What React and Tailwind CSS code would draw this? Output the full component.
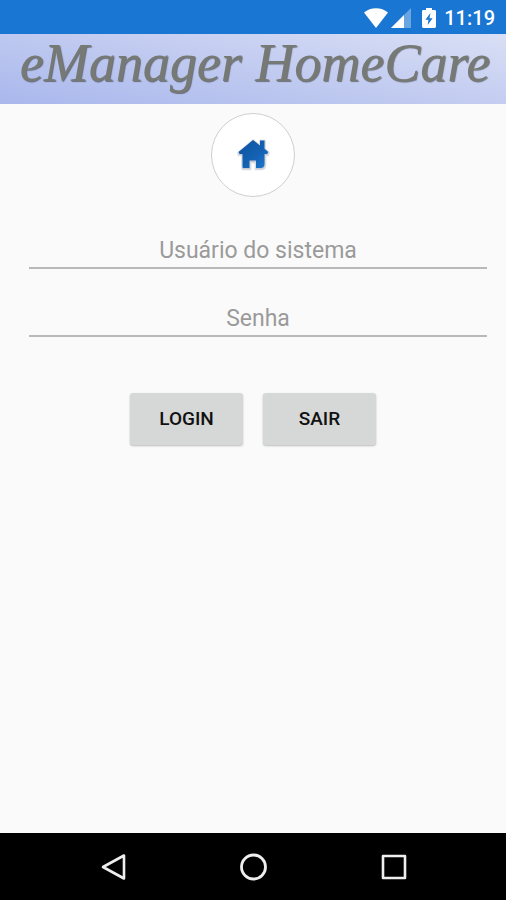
import React, { useState } from "react";

function WifiIcon() {
    return (
        <svg width="26" height="20" viewBox="0 0 26 20" fill="#fff" aria-hidden="true">
            <path d="M13 20 L1 4.6 C4.4 1.7 8.5 0.3 13 0.3 C17.5 0.3 21.6 1.7 25 4.6 Z" />
        </svg>
    );
}

function SignalIcon() {
    return (
        <svg width="20" height="20" viewBox="0 0 20 20" fill="#fff" aria-hidden="true">
            <path d="M20 0 V20 H0 Z" opacity="0.35" />
            <path d="M13 7 V20 H0 Z" />
        </svg>
    );
}

function BatteryIcon() {
    return (
        <svg width="14" height="20" viewBox="0 0 14 20" aria-hidden="true">
            <path
                d="M4 0 H10 V2 H12.6 Q14 2 14 3.4 V18.6 Q14 20 12.6 20 H1.4 Q0 20 0 18.6 V3.4 Q0 2 1.4 2 H4 Z"
                fill="#fff"
            />
            <path d="M8.4 5 L3.4 11.8 H6.5 L5.6 17 L10.6 10.2 H7.5 Z" fill="#1976d2" />
        </svg>
    );
}

function HouseIcon() {
    return (
        <svg width="36" height="36" viewBox="0 0 36 36" aria-hidden="true">
            <defs>
                <linearGradient id="house" x1="0" y1="0" x2="1" y2="1">
                    <stop offset="0" stopColor="#0d529f" />
                    <stop offset="0.6" stopColor="#1462b4" />
                    <stop offset="1" stopColor="#1f7cd0" />
                </linearGradient>
            </defs>
            <path
                d="M18 3 L3 15.5 L3.5 18.5 H7 V31 Q7 32.5 9 32.5 H15.5 V25.5 H20.5 V32.5 H26 Q30.5 32.5 30.5 28 V18.5 H33 L34 15.5 L30 12 V3.5 H25 V8.5 Z"
                fill="#8b95a5"
                stroke="#b9bfc9"
                strokeWidth="1.6"
                strokeLinejoin="round"
                opacity="0.55"
            />
            <path
                d="M18 3 L3.5 15 L4.5 17 H7.5 V30 Q7.5 31 8.5 31 H14.5 V23.5 H21 V31 H25.5 Q29.5 31 29.5 27 V17 H32 L33.3 15 L29.5 11.8 V3.5 H25 V8.5 Z"
                fill="url(#house)"
            />
        </svg>
    );
}

function StatusBar() {
    return (
        <div className="flex h-[34px] items-center justify-end bg-[#1976d2] pt-0.5 pr-[11px] text-white">
            <WifiIcon />
            <span className="ml-0.5 flex">
                <SignalIcon />
            </span>
            <span className="ml-[11px] flex">
                <BatteryIcon />
            </span>
            <span className="ml-2 text-xl leading-none font-medium">11:19</span>
        </div>
    );
}

function Field({ label, type, value, onChange }) {
    return (
        <input
            type={type}
            aria-label={label}
            placeholder={label}
            value={value}
            onChange={(e) => onChange(e.target.value)}
            className="block h-10 w-full border-b-2 border-[#b9b9b9] bg-transparent pt-1 text-center text-[23px] text-gray-900 outline-none placeholder:text-[#9a9a9a]"
        />
    );
}

function ActionButton({ children, type = "button", onClick }) {
    return (
        <button
            type={type}
            onClick={onClick}
            className="h-[52px] w-[113px] rounded-[3px] bg-[#d6d7d7] text-[19px] font-medium text-[#111] shadow-[0_1px_2px_rgba(0,0,0,0.25)]"
        >
            {children}
        </button>
    );
}

function NavBar() {
    return (
        <nav className="flex h-[67px] items-center justify-center gap-[100px] bg-black">
            <button type="button" aria-label="Voltar" className="flex w-10 justify-center">
                <svg width="28" height="28" viewBox="0 0 28 28" fill="none" stroke="#eee" strokeWidth="2.6" strokeLinejoin="round">
                    <path d="M25 2.5 V25.5 L4 14 Z" />
                </svg>
            </button>
            <button type="button" aria-label="Início" className="flex w-10 justify-center">
                <svg width="28" height="28" viewBox="0 0 28 28" fill="none" stroke="#eee" strokeWidth="2.8">
                    <circle cx="14.5" cy="14" r="12" />
                </svg>
            </button>
            <button type="button" aria-label="Recentes" className="flex w-10 justify-center">
                <svg width="28" height="28" viewBox="0 0 28 28" fill="none" stroke="#eee" strokeWidth="2.6" strokeLinejoin="round">
                    <rect x="4" y="3" width="22" height="22" />
                </svg>
            </button>
        </nav>
    );
}

export default function App() {
    const [user, setUser] = useState("");
    const [password, setPassword] = useState("");

    const handleExit = () => {
        setUser("");
        setPassword("");
    };

    return (
        <div className="flex min-h-screen flex-col bg-[#fafafa] font-[Roboto,sans-serif]">
            <StatusBar />

            {/* Brand banner */}
            <header className="flex h-[70px] items-center justify-center bg-linear-[10deg] from-[#a9b7ec] to-[#d9dff5] pb-3 pl-1">
                <h1 className="font-['Liberation_Serif',serif] text-[54px] leading-none whitespace-nowrap text-[#777974] italic [text-shadow:1px_1px_1px_rgba(50,55,50,0.6)]">
                    eManager HomeCare
                </h1>
            </header>

            <main className="flex flex-1 flex-col items-center pt-[9px]">
                <div className="flex size-[84px] items-center justify-center rounded-full border border-[#cfcfcf] bg-white">
                    <HouseIcon />
                </div>

                <form className="w-full pt-8" onSubmit={(e) => e.preventDefault()}>
                    <div className="flex flex-col gap-7 pr-[19px] pl-[29px]">
                        <Field label="Usuário do sistema" type="text" value={user} onChange={setUser} />
                        <Field label="Senha" type="password" value={password} onChange={setPassword} />
                    </div>
                    <div className="mt-14 flex justify-center gap-5">
                        <ActionButton type="submit">LOGIN</ActionButton>
                        <ActionButton onClick={handleExit}>SAIR</ActionButton>
                    </div>
                </form>
            </main>

            <NavBar />
        </div>
    );
}
